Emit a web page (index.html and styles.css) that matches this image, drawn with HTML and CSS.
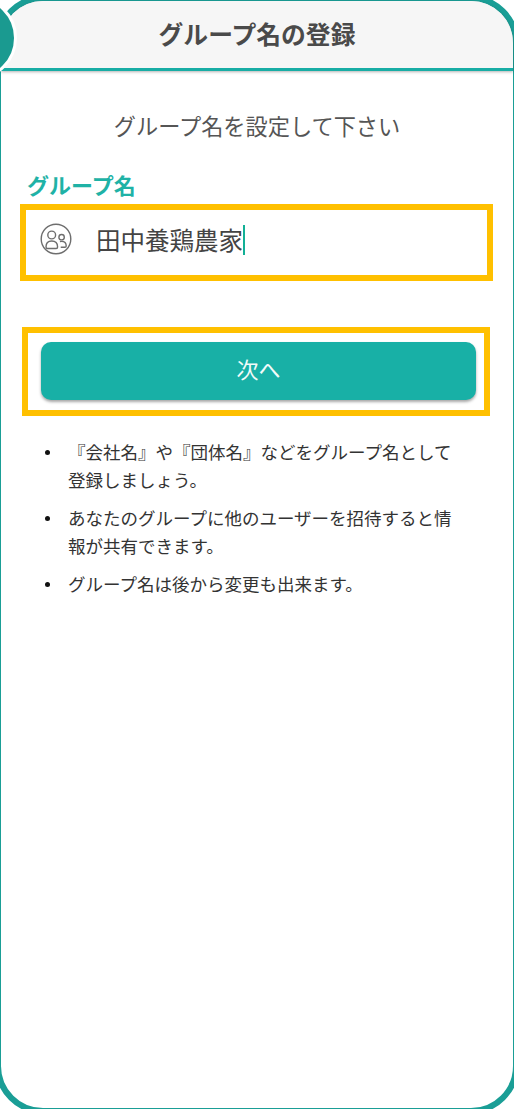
FILE: index.html
```html
<!DOCTYPE html>
<html lang="ja">

<head>
    <meta charset="UTF-8">
    <meta name="viewport" content="width=device-width, initial-scale=1.0">
    <title>グループ名の登録</title>
    <link rel="stylesheet" href="styles.css">
</head>

<body>
    <div class="phone">
        <div class="header">グループ名の登録</div>
        <div class="step-dot"></div>
        <div class="content">
            <div class="lead">グループ名を設定して下さい</div>
            <div class="field-label">グループ名</div>
            <div class="mark mark-input">
                <svg class="group-icon" viewBox="0 0 32 32" fill="none" stroke="#6e6e6e" stroke-width="1.4">
                    <circle cx="16" cy="16" r="14.8" />
                    <circle cx="11.700" cy="12" r="3.900" />
                    <path d="M6 24c0-3.800 2.200-6 5.700-6s5.900 2.200 5.900 6c0 1-.5 1.500-1.400 1.500H7.400C6.500 25.500 6 25 6 24z" />
                    <circle cx="21.600" cy="14.200" r="2.700" />
                    <path d="M20 18.700c.5-.2 1-.3 1.600-.3 2.900 0 4.600 1.900 4.600 4.500 0 .9-.5 1.400-1.300 1.400h-4.200" />
                </svg>
                <div class="input-text">田中養鶏農家<span class="caret"></span></div>
            </div>
            <div class="mark mark-button">
                <button class="next-btn" type="button">次へ</button>
            </div>
            <ul class="notes">
                <li>『会社名』や『団体名』などをグループ名として登録しましょう。</li>
                <li>あなたのグループに他のユーザーを招待すると情報が共有できます。</li>
                <li>グループ名は後から変更も出来ます。</li>
            </ul>
        </div>
    </div>
</body>

</html>
```

FILE: styles.css
```css
html,
body {
    margin: 0;
    height: 100%;
    overflow: hidden;
    background: #fff;
}

body {
    font-family: "Noto Sans CJK JP", "Noto Sans", sans-serif;
}

.phone {
    position: relative;
    box-sizing: border-box;
    width: 524px;
    height: 1119px;
    margin: -5px 0 0 -5px;
    border: 6px solid #1a9e96;
    border-radius: 48px;
    background: #fff;
}

.step-dot {
    position: absolute;
    top: -5px;
    left: -68px;
    width: 78px;
    height: 78px;
    border: 3px solid #fff;
    border-radius: 50%;
    background: #1a9a90;
}

.header {
    box-sizing: border-box;
    height: 70px;
    line-height: 65px;
    text-align: center;
    font-size: 24.800px;
    font-weight: 700;
    color: #4a4a4a;
    background: #f6f6f6;
    border-bottom: 3px solid #18ada5;
    border-radius: 42px 42px 0 0;
    box-shadow: 0 1px 3px rgba(0, 0, 0, 0.3);
}

.content {
    display: flex;
    flex-direction: column;
    padding-top: 37px;
}

.lead {
    line-height: 34px;
    text-align: center;
    font-size: 22.200px;
    color: #555;
}

.field-label {
    margin: 27px 0 0 26px;
    line-height: 30px;
    font-size: 22px;
    font-weight: 700;
    color: #1fb2a6;
}

.mark {
    box-sizing: border-box;
    border: 6px solid #ffc000;
    background: #fff;
}

.mark-input {
    display: flex;
    align-items: center;
    gap: 24px;
    width: 473px;
    height: 77px;
    margin: 5px 0 0 19px;
    padding: 0 0 5px 14px;
}

.group-icon {
    flex: none;
    width: 32px;
    height: 32px;
    margin-bottom: 3px;
}

.input-text {
    display: flex;
    align-items: center;
    font-size: 24.500px;
    line-height: 32px;
    color: #444;
}

.caret {
    width: 1.500px;
    height: 30px;
    background: #12b096;
}

.mark-button {
    width: 468px;
    height: 89px;
    margin: 46px 0 0 21px;
    padding: 9px 8px 0 13px;
}

.next-btn {
    display: block;
    width: 100%;
    height: 58px;
    border: none;
    border-radius: 10px;
    padding: 0 0 6px;
    font-family: inherit;
    font-size: 22px;
    color: #f2fbfa;
    background: #18b0a6;
    box-shadow: 0 2px 3px rgba(0, 0, 0, 0.35);
}

.notes {
    width: 409px;
    margin: 22px 0 0 44px;
    padding: 0;
    list-style: none;
    font-size: 17.500px;
    line-height: 28px;
    color: #333;
}

.notes li {
    display: flex;
    margin-bottom: 10px;
}

.notes li::before {
    content: "";
    flex: none;
    width: 5px;
    height: 5px;
    margin: 12px 18px 0 0;
    border-radius: 50%;
    background: #111;
}
```
